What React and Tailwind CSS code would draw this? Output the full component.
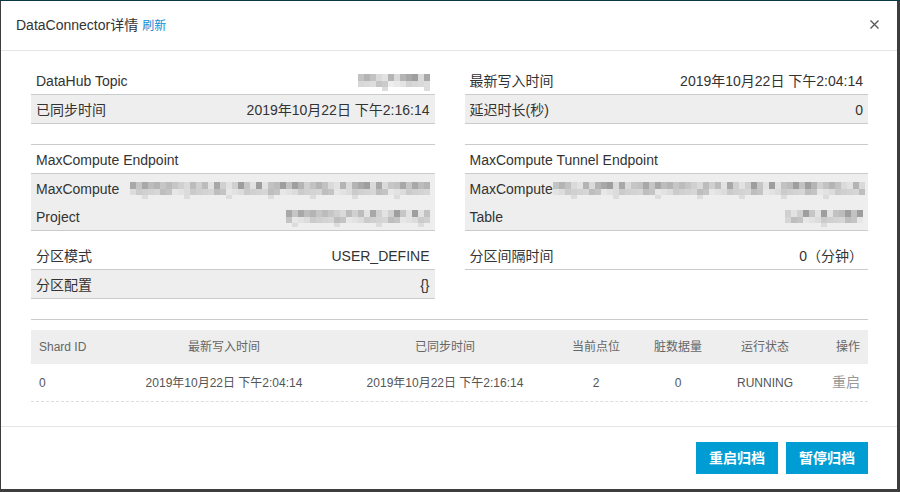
import React from "react";

const shades = ["#d0d0d0", "#bcbcbc", "#c6c6c6", "#a8a8a8", "#dadada", "#b4b4b4", "#c2c2c2", "#9e9e9e", "#e2e2e2"];

// pixelated (mosaic) placeholder for masked values
function Blur({ width, seed = 0 }) {
  const cols = Math.floor(width / 6);
  const cells = [];
  for (let c = 0; c < cols; c++) {
    const k = (c * 7 + seed * 3 + ((c * c) % 5)) % shades.length;
    cells.push(<rect key={"a" + c} x={c * 6} y={0} width="6" height="7" fill={shades[k]} />);
    const k2 = (c * 5 + seed + 4) % shades.length;
    cells.push(<rect key={"b" + c} x={c * 6} y={7} width="6" height="6" fill={shades[(k2 + 4) % shades.length]} opacity="0.6" />);
    if ((c * 3 + seed) % 7 === 0) {
      cells.push(<rect key={"c" + c} x={c * 6} y={13} width="6" height="4" fill="#dcdcdc" />);
    }
  }
  return (
    <svg width={cols * 6} height={17} className="block mt-[3px]">
      {cells}
    </svg>
  );
}

function Row({ label, value, gray }) {
  return (
    <div className={`flex items-center justify-between px-[5px] pt-[2px] h-[29px] border-b border-[#c8cccd] ${gray ? "bg-[#eeeeee]" : ""}`}>
      <span className="text-[#333]">{label}</span>
      <span className="text-[#333]">{value}</span>
    </div>
  );
}

function EndpointBlock({ title, blur1, label3, blur3 }) {
  return (
    <div className="border-t border-[#c8cccd] mt-[20px]">
      <div className="h-[29px] pt-[2px] flex items-center px-[5px] border-b border-[#c8cccd] text-[#333]">{title}</div>
      <div className="bg-[#eeeeee] border-b border-[#c8cccd]">
        <div className="h-[28px] pt-[2px] flex items-center px-[5px] text-[#333]">
          <span>MaxCompute</span>
          <span className="ml-auto">{blur1}</span>
        </div>
        <div className="h-[28px] pt-[2px] flex items-center justify-between px-[5px] text-[#333]">
          <span>{label3}</span>
          {blur3}
        </div>
      </div>
    </div>
  );
}

const cols = "grid grid-cols-[82px_222px_220px_82px_82px_92px_57px]";

export default function App() {
  return (
    <div
      className="h-[492px] w-[900px] bg-[#3d3d3d] border-t border-[#0c3746] pl-px pr-[3px] pb-[3px] text-[14px]"
      style={{ fontFamily: '"Liberation Sans", Arial, "Noto Sans CJK SC", sans-serif' }}
    >
      <div className="h-full bg-white flex flex-col">
        {/* header */}
        <div className="h-[50px] shrink-0 border-b border-[#e5e5e5] flex items-center pl-[15px] pr-[18px]">
          <span className="text-[#333]">DataConnector详情</span>
          <span className="text-[12px] text-[#0b8ed3] ml-[4px]">刷新</span>
          <svg width="9" height="9" viewBox="0 0 9 9" className="ml-auto mt-[-3px]">
            <path d="M0.5 0.5L8.5 8.5M8.5 0.5L0.5 8.5" stroke="#555" strokeWidth="1.3" />
          </svg>
        </div>

        {/* body */}
        <div className="flex-1 pl-[30px] pr-[29px] pt-[15px]">
          <div className="grid grid-cols-2 gap-x-[30px]">
            {/* left */}
            <div>
              <Row label="DataHub Topic" value={<Blur width={72} seed={2} />} />
              <Row label="已同步时间" value="2019年10月22日 下午2:16:14" gray />
              <EndpointBlock
                title="MaxCompute Endpoint"
                blur1={<Blur width={300} seed={1} />}
                label3="Project"
                blur3={<Blur width={144} seed={4} />}
              />
              <div className="mt-[10px]">
                <Row label="分区模式" value="USER_DEFINE" />
                <Row label="分区配置" value="{}" gray />
              </div>
            </div>
            {/* right */}
            <div>
              <Row label="最新写入时间" value="2019年10月22日 下午2:04:14" />
              <Row label="延迟时长(秒)" value="0" gray />
              <EndpointBlock
                title="MaxCompute Tunnel Endpoint"
                blur1={<Blur width={312} seed={5} />}
                label3="Table"
                blur3={<Blur width={78} seed={3} />}
              />
              <div className="mt-[10px]">
                <Row label="分区间隔时间" value="0（分钟）" />
              </div>
            </div>
          </div>

          {/* shard table */}
          <div className="mt-[20px] border-t border-[#c8cccd] pt-[10px] text-[12px]">
            <div className={`${cols} h-[34px] items-center bg-[#eeeeee] text-[#666]`}>
              <span className="pl-[8px]">Shard ID</span>
              <span className="text-center">最新写入时间</span>
              <span className="text-center">已同步时间</span>
              <span className="text-center">当前点位</span>
              <span className="text-center">脏数据量</span>
              <span className="text-center">运行状态</span>
              <span className="text-right pr-[8px]">操作</span>
            </div>
            <div className={`${cols} h-[38px] items-center text-[#555] border-b border-dashed border-[#dcdfe0]`}>
              <span className="pl-[8px]">0</span>
              <span className="text-center">2019年10月22日 下午2:04:14</span>
              <span className="text-center">2019年10月22日 下午2:16:14</span>
              <span className="text-center">2</span>
              <span className="text-center">0</span>
              <span className="text-center">RUNNING</span>
              <span className="text-right pr-[8px] text-[14px] text-[#999]">重启</span>
            </div>
          </div>
        </div>

        {/* footer */}
        <div className="h-[63px] shrink-0 border-t border-[#e5e5e5] flex items-start justify-end gap-[8px] pt-[15px] pr-[29px]">
          <button className="h-[32px] w-[82px] bg-[#009dd4] text-white text-[14px] font-bold">重启归档</button>
          <button className="h-[32px] w-[82px] bg-[#009dd4] text-white text-[14px] font-bold">暂停归档</button>
        </div>
      </div>
    </div>
  );
}
